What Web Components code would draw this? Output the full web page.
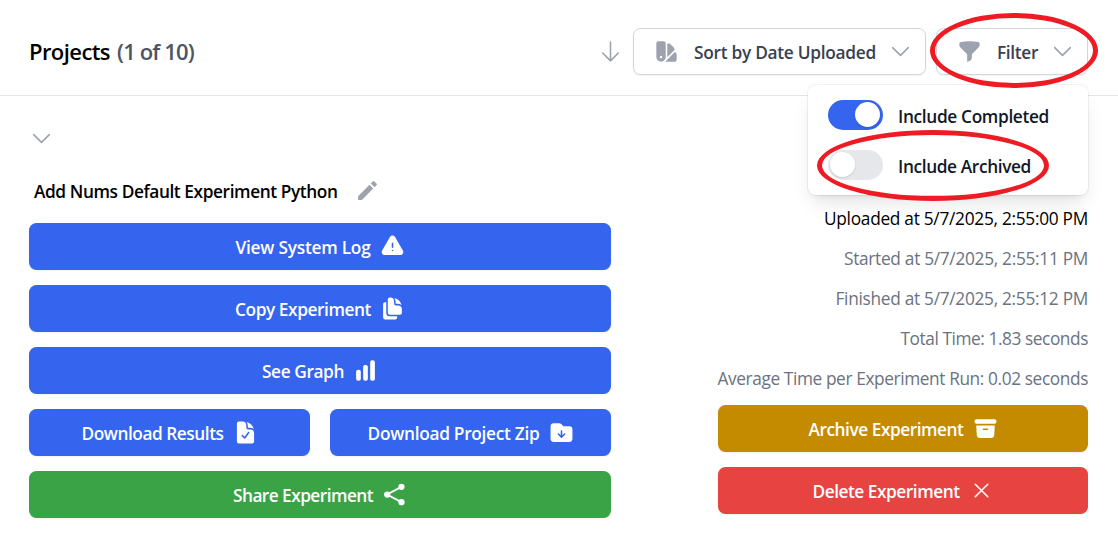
<!DOCTYPE html>
<html lang="en">
<head>
<meta charset="utf-8">
<title>Projects</title>
<style>
html,body{margin:0;background:#fff;overflow:hidden}
body{font-family:"Open Sans","Noto Sans",sans-serif;font-size:17.3px;line-height:24px;color:#000}
</style>
</head>
<body>
<projects-page></projects-page>
<script>
const ICONS = {
  warn:'<path fill-rule="evenodd" d="M9.401 3.003c1.155-2 4.043-2 5.197 0l7.355 12.748c1.154 2-.29 4.5-2.599 4.5H4.645c-2.309 0-3.752-2.5-2.598-4.5L9.4 3.003ZM12 8.25a.75.75 0 0 1 .75.75v3.75a.75.75 0 0 1-1.5 0V9a.75.75 0 0 1 .75-.75Zm0 8.25a.75.75 0 1 0 0-1.5.75.75 0 0 0 0 1.5Z"/>',
  copy:'<path d="M7.5 3.375c0-1.036.84-1.875 1.875-1.875h.375a3.75 3.75 0 0 1 3.75 3.75v1.875C13.5 8.161 14.34 9 15.375 9h1.875A3.75 3.75 0 0 1 21 12.75v3.375C21 17.16 20.16 18 19.125 18h-9.75A1.875 1.875 0 0 1 7.5 16.125V3.375Z"/><path d="M15 5.25a5.23 5.23 0 0 0-1.279-3.434 9.768 9.768 0 0 1 6.963 6.963A5.23 5.23 0 0 0 17.25 7.5h-1.875A.375.375 0 0 1 15 7.125V5.25ZM4.875 6H6v10.125A3.375 3.375 0 0 0 9.375 19.5H16.5v1.125c0 1.035-.84 1.875-1.875 1.875h-9.75A1.875 1.875 0 0 1 3 20.625V7.875C3 6.839 3.84 6 4.875 6Z"/>',
  chart:'<path d="M18.375 2.25c-1.035 0-1.875.84-1.875 1.875v15.75c0 1.035.84 1.875 1.875 1.875h.75c1.035 0 1.875-.84 1.875-1.875V4.125c0-1.036-.84-1.875-1.875-1.875h-.75ZM9.75 8.625c0-1.036.84-1.875 1.875-1.875h.75c1.036 0 1.875.84 1.875 1.875v11.25c0 1.035-.84 1.875-1.875 1.875h-.75a1.875 1.875 0 0 1-1.875-1.875V8.625ZM3 13.125c0-1.036.84-1.875 1.875-1.875h.75c1.036 0 1.875.84 1.875 1.875v6.75c0 1.035-.84 1.875-1.875 1.875h-.75A1.875 1.875 0 0 1 3 19.875v-6.75Z"/>',
  doc:'<path fill-rule="evenodd" d="M9 1.5H5.625c-1.036 0-1.875.84-1.875 1.875v17.25c0 1.035.84 1.875 1.875 1.875h12.75c1.035 0 1.875-.84 1.875-1.875V12.75A3.75 3.75 0 0 0 16.5 9h-1.875a1.875 1.875 0 0 1-1.875-1.875V5.25A3.75 3.75 0 0 0 9 1.5Zm6.61 10.936a.75.75 0 1 0-1.22-.872l-3.236 4.53L9.53 14.47a.75.75 0 0 0-1.06 1.06l2.25 2.25a.75.75 0 0 0 1.14-.094l3.75-5.25Z"/><path d="M12.971 1.816A5.23 5.23 0 0 1 14.25 5.25v1.875c0 .207.168.375.375.375H16.5a5.23 5.23 0 0 1 3.434 1.279 9.768 9.768 0 0 0-6.963-6.963Z"/>',
  folder:'<path fill-rule="evenodd" d="M19.5 21a3 3 0 0 0 3-3V9a3 3 0 0 0-3-3h-5.379a.75.75 0 0 1-.53-.22L11.47 3.66A2.25 2.25 0 0 0 9.879 3H4.5a3 3 0 0 0-3 3v12a3 3 0 0 0 3 3h15Zm-6.75-10.5a.75.75 0 0 0-1.5 0v4.19l-1.72-1.72a.75.75 0 0 0-1.06 1.06l3 3a.75.75 0 0 0 1.06 0l3-3a.75.75 0 1 0-1.06-1.06l-1.72 1.72V10.5Z"/>',
  share:'<path d="M18.6 4.7 4.9 12l13.7 7.3" fill="none" stroke="currentColor" stroke-width="1.7"/><circle cx="18.7" cy="4.6" r="3"/><circle cx="5" cy="12" r="3"/><circle cx="18.7" cy="19.4" r="3"/>',
  archive:'<path d="M3.375 3C2.339 3 1.5 3.84 1.5 4.875v.75c0 1.036.84 1.875 1.875 1.875h17.25c1.035 0 1.875-.84 1.875-1.875v-.75C22.5 3.839 21.66 3 20.625 3H3.375Z"/><path fill-rule="evenodd" d="m3.087 9 .54 9.176A3 3 0 0 0 6.62 21h10.757a3 3 0 0 0 2.995-2.824L20.913 9H3.087Zm6.163 3.75A.75.75 0 0 1 10 12h4a.75.75 0 0 1 0 1.5h-4a.75.75 0 0 1-.75-.75Z"/>',
  x:'<path d="M6 18 18 6M6 6l12 12" fill="none" stroke="currentColor" stroke-width="1.5" stroke-linecap="round"/>',
  swatch:'<path fill-rule="evenodd" d="M2.25 4.125c0-1.036.84-1.875 1.875-1.875h5.25c1.036 0 1.875.84 1.875 1.875V17.25a4.5 4.5 0 1 1-9 0V4.125Zm4.5 14.25a1.125 1.125 0 1 0 0-2.25 1.125 1.125 0 0 0 0 2.25Z"/><path d="M10.719 21.75h9.156c1.036 0 1.875-.84 1.875-1.875v-5.25c0-1.036-.84-1.875-1.875-1.875h-.14l-8.742 8.743c-.09.089-.18.175-.274.257ZM12.738 17.625l6.474-6.474a1.875 1.875 0 0 0 0-2.651L15.5 4.787a1.875 1.875 0 0 0-2.651 0l-.1.099V17.25c0 .126-.003.251-.01.375Z"/>',
  funnel:'<path d="M3.792 2.938A49.069 49.069 0 0 1 12 2.25c2.797 0 5.54.236 8.209.688a1.857 1.857 0 0 1 1.541 1.836v1.044a3 3 0 0 1-.879 2.121l-6.182 6.182a1.5 1.5 0 0 0-.439 1.061v2.927a3 3 0 0 1-1.658 2.684l-1.757.878A.75.75 0 0 1 9.75 21v-5.818a1.5 1.5 0 0 0-.44-1.06L3.13 7.938a3 3 0 0 1-.879-2.121V4.774c0-.897.64-1.683 1.542-1.836Z"/>',
  chevron:'<path d="m19.5 8.25-7.5 7.5-7.5-7.5" fill="none" stroke="currentColor" stroke-width="1.5" stroke-linecap="round" stroke-linejoin="round"/>',
  down:'<path d="M19.5 13.5 12 21m0 0-7.5-7.5M12 21V3" fill="none" stroke="currentColor" stroke-width="1.5" stroke-linecap="round" stroke-linejoin="round"/>',
  pencil:'<path d="M3 17.4V21h3.6L17.5 10.1l-3.6-3.6L3 17.4zM20.8 6.8a.9.9 0 0 0 0-1.3l-2.3-2.3a.9.9 0 0 0-1.3 0l-2 2 3.6 3.6 2-2z"/>'
};
const define = (name, cls) => customElements.define(name, cls);
class Base extends HTMLElement {
  connectedCallback(){
    if(this.shadowRoot) return;
    this.attachShadow({mode:'open'}).innerHTML = this.render();
    this.ready && this.ready();
  }
}
define('ui-icon', class extends Base {
  render(){return `<style>:host{display:block;flex:none;width:25px;height:25px}svg{display:block;width:100%;height:100%}</style><svg viewBox="0 0 24 24" fill="currentColor">${ICONS[this.getAttribute('name')]}</svg>`}
});
/* A single-line label whose tracking is adjusted to fill the given width. */
define('fit-text', class extends Base {
  render(){return `<style>:host{display:block;flex:none;white-space:nowrap}span{display:inline-block}</style><span>${this.getAttribute('text')}</span>`}
  ready(){
    const s=this.shadowRoot.querySelector('span'), w=+this.getAttribute('width'), n=this.getAttribute('text').length;
    s.style.letterSpacing=((w-s.getBoundingClientRect().width)/n)+'px';
    this.style.width=w+'px';
  }
});
define('action-button', class extends Base {
  render(){return `<style>:host{display:block;min-width:0}
  button{all:unset;box-sizing:border-box;display:flex;align-items:center;justify-content:center;gap:9px;width:100%;height:47px;border-radius:7.5px;background:var(--tone,#3564ee);color:#fff;font-weight:600;box-shadow:0 1px 2px rgba(0,0,0,.05)}
  fit-text{padding-top:2px}</style>
  <button><fit-text text="${this.getAttribute('label')}" width="${this.getAttribute('width')}"></fit-text><ui-icon name="${this.getAttribute('icon')}"></ui-icon></button>`}
});
define('menu-button', class extends Base {
  render(){return `<style>:host{display:block;flex:none}
  button{all:unset;box-sizing:border-box;display:flex;align-items:center;height:47px;padding:0 12px 0 20px;border:1px solid #d1d5db;border-radius:7.5px;background:#fff;color:#374151;font-weight:600;box-shadow:0 1px 2px rgba(0,0,0,.05)}
  ui-icon{color:#9ca3af}fit-text{margin:0 12px 0 15px;padding-top:2px}</style>
  <button><ui-icon name="${this.getAttribute('icon')}"></ui-icon><fit-text text="${this.getAttribute('label')}" width="${this.getAttribute('width')}"></fit-text><ui-icon name="chevron"></ui-icon></button>`}
});
define('toggle-row', class extends Base {
  render(){return `<style>:host{display:flex;align-items:center;gap:15px;height:30px;color:#111827;font-weight:600}
  i{display:flex;box-sizing:border-box;width:55px;height:30px;padding:2px 3px 3px 2px;border-radius:15px;background:#e5e7eb}
  i::before{content:"";width:25px;height:25px;border-radius:50%;background:#fff;box-shadow:0 1px 2px rgba(0,0,0,.12)}
  :host([on]) i{background:#3564ee;justify-content:flex-end}fit-text{padding-top:3px}</style>
  <i></i><fit-text text="${this.getAttribute('label')}" width="${this.getAttribute('width')}"></fit-text>`}
});
define('filter-menu', class extends Base {
  render(){return `<style>:host{position:absolute;left:808px;top:85px;box-sizing:border-box;width:280px;height:110px;padding:15px 20px;display:flex;flex-direction:column;gap:20px;background:#fff;border-radius:7.5px;box-shadow:0 0 0 1px rgba(0,0,0,.05),0 12px 19px -4px rgba(0,0,0,.1),0 5px 7px -5px rgba(0,0,0,.1)}</style><slot></slot>`}
});
define('ring-mark', class extends Base {
  render(){return `<style>:host{position:absolute;box-sizing:border-box;border:5px solid #ed1c24;border-radius:50%}</style>`}
});
define('page-header', class extends Base {
  render(){return `<style>:host{display:flex;box-sizing:border-box;height:96px;padding:28px 30px 20px 29px;border-bottom:1px solid #e5e7eb}
  h1{all:unset;display:flex;gap:7px;flex:1;font-size:22px;line-height:46px;font-weight:600}
  .n{color:#4b5563;font-weight:550}ui-icon{color:#9ca3af;margin:11px 10px 0 0}menu-button+menu-button{margin-left:10px}</style>
  <h1><fit-text text="Projects" width="81"></fit-text><fit-text class="n" text="(1 of 10)" width="77"></fit-text></h1>
  <ui-icon name="down"></ui-icon>
  <menu-button icon="swatch" label="Sort by Date Uploaded" width="182"></menu-button>
  <menu-button icon="funnel" label="Filter" width="41"></menu-button>`}
});
define('run-info', class extends Base {
  render(){return `<style>:host{display:flex;flex-direction:column;align-items:flex-end;color:#6b7280}
  fit-text{height:40px;line-height:42px}fit-text:first-of-type{color:#000}</style>
  <fit-text text="Uploaded at 5/7/2025, 2:55:00 PM" width="264"></fit-text>
  <fit-text text="Started at 5/7/2025, 2:55:11 PM" width="244"></fit-text>
  <fit-text text="Finished at 5/7/2025, 2:55:12 PM" width="252.5"></fit-text>
  <fit-text text="Total Time: 1.83 seconds" width="187.5"></fit-text>
  <fit-text text="Average Time per Experiment Run: 0.02 seconds" width="370.5"></fit-text>`}
});
define('project-card', class extends Base {
  render(){return `<style>:host{display:flex;justify-content:space-between;padding:0 30px 0 29px}
  .l{width:582px}.r{width:370px;padding-top:102px}
  .chev{margin-top:30px;color:#9ca3af}
  .name{display:flex;align-items:center;height:40px;margin-top:20px;padding-left:5px;gap:17px;font-weight:600}
  .name fit-text{padding-top:2px}.name ui-icon{color:#9ca3af;margin-bottom:1px}
  .grid{display:grid;grid-template-columns:1fr 1fr;gap:15px 20px;margin-top:12px}.w{grid-column:1/-1}
  .stack{display:grid;gap:15px;margin-top:7px}
  .green{--tone:#39a346}.gold{--tone:#c48a00}.red{--tone:#e74341}</style>
  <div class="l"><ui-icon class="chev" name="chevron"></ui-icon>
  <div class="name"><fit-text text="Add Nums Default Experiment Python" width="303.5"></fit-text><ui-icon name="pencil"></ui-icon></div>
  <div class="grid">
  <action-button class="w" label="View System Log" width="135" icon="warn"></action-button>
  <action-button class="w" label="Copy Experiment" width="136" icon="copy"></action-button>
  <action-button class="w" label="See Graph" width="82" icon="chart"></action-button>
  <action-button label="Download Results" width="142" icon="doc"></action-button>
  <action-button label="Download Project Zip" width="172" icon="folder"></action-button>
  <action-button class="w green" label="Share Experiment" width="140" icon="share"></action-button>
  </div></div>
  <div class="r"><run-info></run-info><div class="stack">
  <action-button class="gold" label="Archive Experiment" width="155" icon="archive"></action-button>
  <action-button class="red" label="Delete Experiment" width="147" icon="x"></action-button></div></div>`}
});
define('projects-page', class extends Base {
  render(){return `<style>:host{display:block;position:relative;width:1118px;height:545px;overflow:hidden;background:#fff}
  .a{left:930px;top:13px;width:168px;height:75px}.b{left:817px;top:130px;width:232px;height:71px}</style>
  <page-header></page-header><project-card></project-card>
  <filter-menu><toggle-row on label="Include Completed" width="151"></toggle-row><toggle-row label="Include Archived" width="133"></toggle-row></filter-menu>
  <ring-mark class="a"></ring-mark><ring-mark class="b"></ring-mark>`}
});
</script>
</body>
</html>
